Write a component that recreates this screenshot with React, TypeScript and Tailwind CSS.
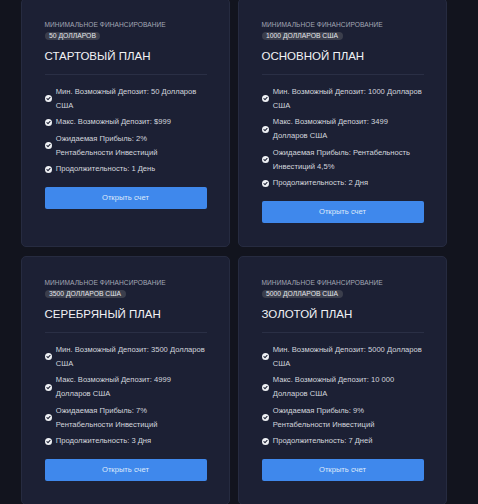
import React from "react";

type Plan = {
  amount: string;
  title: string;
  items: string[][];
};

const plans: Plan[] = [
  {
    amount: "50 долларов",
    title: "СТАРТОВЫЙ ПЛАН",
    items: [
      ["Мин. Возможный Депозит: 50 Долларов", "США"],
      ["Макс. Возможный Депозит: $999"],
      ["Ожидаемая Прибыль: 2%", "Рентабельности Инвестиций"],
      ["Продолжительность: 1 День"],
    ],
  },
  {
    amount: "1000 долларов США",
    title: "ОСНОВНОЙ ПЛАН",
    items: [
      ["Мин. Возможный Депозит: 1000 Долларов", "США"],
      ["Макс. Возможный Депозит: 3499", "Долларов США"],
      ["Ожидаемая Прибыль: Рентабельность", "Инвестиций 4,5%"],
      ["Продолжительность: 2 Дня"],
    ],
  },
  {
    amount: "3500 долларов США",
    title: "СЕРЕБРЯНЫЙ ПЛАН",
    items: [
      ["Мин. Возможный Депозит: 3500 Долларов", "США"],
      ["Макс. Возможный Депозит: 4999", "Долларов США"],
      ["Ожидаемая Прибыль: 7%", "Рентабельности Инвестиций"],
      ["Продолжительность: 3 Дня"],
    ],
  },
  {
    amount: "5000 долларов США",
    title: "ЗОЛОТОЙ ПЛАН",
    items: [
      ["Мин. Возможный Депозит: 5000 Долларов", "США"],
      ["Макс. Возможный Депозит: 10 000", "Долларов США"],
      ["Ожидаемая Прибыль: 9%", "Рентабельности Инвестиций"],
      ["Продолжительность: 7 Дней"],
    ],
  },
];

function CheckIcon() {
  return (
    <svg viewBox="0 0 16 16" className="w-[7px] h-[7px] shrink-0">
      <circle cx="8" cy="8" r="8" fill="#eef0f4" />
      <path
        d="M4.4 8.2 L6.9 10.6 L11.6 5.6"
        fill="none"
        stroke="#1b1f32"
        strokeWidth="2.4"
        strokeLinecap="round"
        strokeLinejoin="round"
      />
    </svg>
  );
}

function PlanCard({ plan }: { plan: Plan }) {
  return (
    <div className="flex flex-col rounded-[5px] border border-[#262b40] bg-[#1c2034] px-[22.5px] pt-[22px] pb-[23px]">
      <div className="text-[6.6px] leading-[8px] uppercase text-[#a3a7b4] tracking-[0.01em] whitespace-nowrap">
        Минимальное финансирование
      </div>
      <div className="mt-[2.5px] flex">
        <span className="rounded-full bg-[#3b3e4c] px-[4.5px] text-[6.8px] leading-[8.5px] uppercase text-[#e4e6eb]">
          {plan.amount}
        </span>
      </div>
      <div className="mt-[8.5px] text-[11.5px] leading-[14px] text-[#f1f2f5]">
        {plan.title}
      </div>
      <div className="mt-[11px] border-t border-[#2a2f45]" />
      <ul className="mt-[10px] flex flex-col gap-[2.5px]">
        {plan.items.map((lines, i) => (
          <li key={i} className="flex items-center gap-[4.3px]">
            <CheckIcon />
            <span className="text-[7.6px] leading-[14px] text-[#d3d6de] whitespace-nowrap">
              {lines.map((l, j) => (
                <React.Fragment key={j}>
                  {j > 0 && <br />}
                  {l}
                </React.Fragment>
              ))}
            </span>
          </li>
        ))}
      </ul>
      <button className="mt-[11px] h-[22px] w-full rounded-[2px] bg-[#3f88ec] text-[7.6px] text-[#dde8fb]">
        Открыть счет
      </button>
    </div>
  );
}

export default function App() {
  return (
    <div
      className="h-[504px] overflow-hidden bg-[#12141e] pl-[21px]"
      style={{ fontFamily: '"Liberation Sans", Arial, sans-serif' }}
    >
      <div className="-mt-[2px] grid grid-cols-[209px_209px] gap-x-[8px] gap-y-[9px]">
        {plans.map((p, i) => (
          <PlanCard key={i} plan={p} />
        ))}
      </div>
    </div>
  );
}
